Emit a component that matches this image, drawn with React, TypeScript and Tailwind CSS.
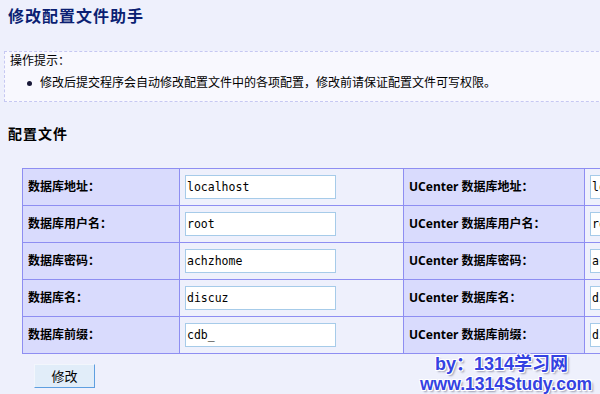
import React from 'react';

const rows = [
  { label: '数据库地址：', value: 'localhost', ucLabel: 'UCenter 数据库地址：', ucValue: 'localhost' },
  { label: '数据库用户名：', value: 'root', ucLabel: 'UCenter 数据库用户名：', ucValue: 'root' },
  { label: '数据库密码：', value: 'achzhome', ucLabel: 'UCenter 数据库密码：', ucValue: 'achzhome' },
  { label: '数据库名：', value: 'discuz', ucLabel: 'UCenter 数据库名：', ucValue: 'discuz' },
  { label: '数据库前缀：', value: 'cdb_', ucLabel: 'UCenter 数据库前缀：', ucValue: 'discuz.uc_' },
];

function Field({ value }: { value: string }) {
  return (
    <input
      readOnly
      defaultValue={value}
      className="w-[151px] h-[24px] bg-white border border-[#a6cbe9] px-[1px] text-[11.5px] text-black font-['DejaVu_Sans_Mono',monospace] outline-none"
    />
  );
}

export default function App() {
  return (
    <div className="relative w-[600px] h-[394px] overflow-hidden bg-[#eef0fc] text-black font-['Noto_Sans','Noto_Sans_CJK_SC',sans-serif]">
      <div className="pt-[6px] pl-[8px] h-[26px] leading-[20px] text-[16px] font-bold tracking-[1px] text-[#0b1f73]">
        修改配置文件助手
      </div>

      {/* 操作提示 */}
      <div className="mt-[25px] ml-[4px] w-[620px] bg-[#f8f8fe] border border-dashed border-[#c6c8f2] pl-[5px] pb-[9px]">
        <div className="h-[18px] leading-[18px] text-[12px]">操作提示：</div>
        <div className="mt-[4px] h-[18px] flex items-center text-[12px]">
          <span className="ml-[17px] w-[5px] h-[5px] rounded-full bg-[#181838]" />
          <span className="ml-[8px] leading-[18px]">修改后提交程序会自动修改配置文件中的各项配置，修改前请保证配置文件可写权限。</span>
        </div>
      </div>

      <div className="mt-[22px] ml-[8px] h-[20px] leading-[20px] text-[14px] font-bold tracking-[1px]">配置文件</div>

      {/* 表格 */}
      <div className="mt-[24px] ml-[22px] w-[780px] grid grid-cols-[156px_223px_180px_217px] gap-[1px] p-[1px] bg-[#8e8ef2]">
        {rows.map((r) => (
          <React.Fragment key={r.label}>
            <div className="h-[36px] bg-[#d9dbfd] pl-[5px] flex items-center text-[12px] font-bold">{r.label}</div>
            <div className="h-[36px] bg-[#eef0fc] pl-[5px] flex items-center">
              <Field value={r.value} />
            </div>
            <div className="h-[36px] bg-[#d9dbfd] pl-[5px] flex items-center text-[12px] font-bold">{r.ucLabel}</div>
            <div className="h-[36px] bg-[#eef0fc] pl-[5px] flex items-center">
              <Field value={r.ucValue} />
            </div>
          </React.Fragment>
        ))}
      </div>

      <button className="mt-[10px] ml-[34px] w-[61px] h-[24px] bg-[#e1edf9] border border-t-[#f2f6fc] border-l-[#f2f6fc] border-r-[#5e9fe0] border-b-[#5e9fe0] text-[13px] leading-[22px] text-black">
        修改
      </button>

      {/* 水印 */}
      <div className="absolute left-[435px] top-[355px] leading-[18px] text-[18px] font-bold text-[#3442e2] font-['Liberation_Sans','Noto_Sans_CJK_SC',sans-serif] whitespace-nowrap [text-shadow:1px_1px_0_#fff,-1px_-1px_0_#fff,1px_-1px_0_#fff,-1px_1px_0_#fff,2px_2px_2px_rgba(0,0,40,0.35)]">
        by：1314学习网
      </div>
      <div className="absolute left-[420px] top-[375px] leading-[18px] text-[17.5px] font-bold text-[#3442e2] font-['Liberation_Sans',sans-serif] whitespace-nowrap [text-shadow:1px_1px_0_#fff,-1px_-1px_0_#fff,1px_-1px_0_#fff,-1px_1px_0_#fff,2px_2px_2px_rgba(0,0,40,0.35)]">
        www.1314Study.com
      </div>
    </div>
  );
}
